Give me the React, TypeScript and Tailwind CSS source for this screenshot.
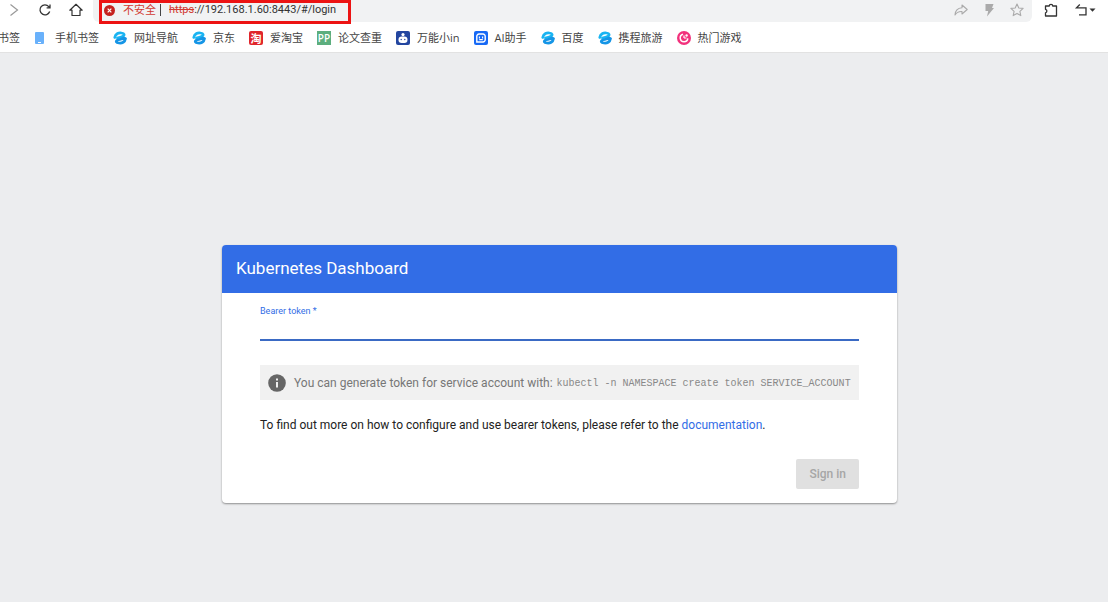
import type { ReactNode } from 'react';

const BrowserSwirl = () => (
  <svg viewBox="0 0 28 28" className="size-3.5" fill="none" strokeLinecap="round" aria-hidden="true">
    <path d="M3.500 13C5 5 12 3 17 4c6 1 7 4.500 2 7-3 1.500-7 2-10 3" stroke="#19b4f2" strokeWidth="5.500" />
    <path d="M25 15c-1 7-7 10-13 9-6-1-7-3.500-3-5.500 4-1.500 8-2 13-4.500" stroke="#1595e6" strokeWidth="5.500" />
  </svg>
);

const PhoneIcon = () => (
  <svg viewBox="0 0 14 14" className="size-3.5" aria-hidden="true">
    <rect x="1" y="1" width="9" height="12" rx="1" fill="#69b1fb" />
    <rect x="4" y="11" width="3" height="1" fill="#fff" />
  </svg>
);

const RobotIcon = () => (
  <svg viewBox="0 0 14 14" className="size-3.5" aria-hidden="true">
    <rect width="14" height="14" rx="2" fill="#2346a0" />
    <circle cx="7" cy="3.600" r="1.600" fill="#fff" />
    <rect x="2.500" y="5.500" width="9" height="6.500" rx="3.200" fill="#fff" />
    <circle cx="5.200" cy="8.500" r="0.700" fill="#2346a0" />
    <circle cx="8.800" cy="8.500" r="0.700" fill="#2346a0" />
  </svg>
);

const AssistantIcon = () => (
  <svg viewBox="0 0 14 14" className="size-3.5" aria-hidden="true">
    <rect width="14" height="14" rx="2" fill="#1769f5" />
    <path d="M5 3h4a2.200 2.200 0 0 1 2.200 2.200v3.600A2.200 2.200 0 0 1 9 11H2.800V5.200A2.200 2.200 0 0 1 5 3z" fill="none" stroke="#fff" strokeWidth="1.400" />
    <path d="M5.400 5.600v1.800M8.600 5.600v1.800M5.200 8.600h3.600" fill="none" stroke="#fff" strokeWidth="1.100" />
  </svg>
);

const GameIcon = () => (
  <svg viewBox="0 0 14 14" className="size-3.5" aria-hidden="true">
    <circle cx="7" cy="7" r="7" fill="#f2317c" />
    <path d="M10.800 7.400A3.800 3.800 0 1 1 6 3.300" fill="none" stroke="#fff" strokeWidth="1.500" />
    <path d="M7 7V4.500M7 7h2.500" fill="none" stroke="#fff" strokeWidth="1.200" />
    <circle cx="9.600" cy="4.500" r="1.200" fill="#fff" />
  </svg>
);

const TaoIcon = () => (
  <span className="flex size-3.5 items-center justify-center rounded-xs bg-[#e0252b] text-[11px] font-bold leading-none text-white">淘</span>
);

const PaperIcon = () => (
  <span className="flex size-3.5 items-center justify-center bg-[#5cae7e] text-[10px] font-semibold leading-none text-white">PP</span>
);

const bookmarks: { label: string; icon: ReactNode }[] = [
  { label: '手机书签', icon: <PhoneIcon /> },
  { label: '网址导航', icon: <BrowserSwirl /> },
  { label: '京东', icon: <BrowserSwirl /> },
  { label: '爱淘宝', icon: <TaoIcon /> },
  { label: '论文查重', icon: <PaperIcon /> },
  { label: '万能小in', icon: <RobotIcon /> },
  { label: 'AI助手', icon: <AssistantIcon /> },
  { label: '百度', icon: <BrowserSwirl /> },
  { label: '携程旅游', icon: <BrowserSwirl /> },
  { label: '热门游戏', icon: <GameIcon /> },
];

const Toolbar = () => (
  <div className="flex h-[22px] items-start">
    <div className="flex w-[93px] shrink-0 items-center gap-[17px] pl-[7px] pt-[3px] text-[#333]">
      <button aria-label="Forward" className="text-[#999]">
        <svg viewBox="0 0 14 14" className="size-3.5" fill="none" stroke="currentColor" strokeWidth="1.200">
          <path d="M3.500 1.500L10.500 7l-7 5.500" />
        </svg>
      </button>
      <button aria-label="Reload">
        <svg viewBox="0 0 14 14" className="size-3.5" fill="none" stroke="currentColor" strokeWidth="1.300">
          <path d="M11.700 8.500A5 5 0 1 1 10.800 3.600l1 1.200M12 1.500v3.400H8.600" />
        </svg>
      </button>
      <button aria-label="Home">
        <svg viewBox="0 0 14 14" className="size-3.5" fill="none" stroke="currentColor" strokeWidth="1.200">
          <path d="M.8 7.200L7 1.300l6.200 5.900H11v5.300H3V7.200z" strokeLinejoin="round" />
        </svg>
      </button>
    </div>

    {/* Address bar */}
    <div className="relative flex h-[22px] min-w-0 flex-1 items-start rounded-b-md bg-[#f1f2f3] pl-[11px] pr-2">
      <div className="pointer-events-none absolute left-[6px] top-0 h-6 w-[252px] border-3 border-[#ec1313]" />
      <div className="flex h-5 shrink-0 items-center text-[11px] leading-5">
        <svg viewBox="0 0 12 12" className="mr-2 size-[11px]" aria-hidden="true">
          <circle cx="6" cy="6" r="6" fill="#c5221f" />
          <path d="M4 4l4 4M8 4L4 8" stroke="#fff" strokeWidth="1.300" />
        </svg>
        <span className="text-[#d23a32]">不安全</span>
        <span className="ml-1 mr-2 h-3 w-px bg-[#444]" />
      </div>
      <label htmlFor="address" className="h-5 font-[Roboto,sans-serif] text-[11px] leading-5 text-[#d23a32] line-through">
        https
      </label>
      <input
        id="address"
        type="text"
        defaultValue="://192.168.1.60:8443/#/login"
        className="h-5 min-w-0 flex-1 bg-transparent font-[Roboto,sans-serif] text-[11px] leading-5 text-[#333] outline-none"
      />
      <div className="flex items-center gap-3.5 pt-[3px] text-[#aaa]">
        <button aria-label="Share">
          <svg viewBox="0 0 14 14" className="size-3.5" fill="none" stroke="currentColor" strokeWidth="1.100">
            <path d="M8 2l5.200 4.500L8 11V8.500C4.500 8.300 2.500 9.500 1 12c.2-4 2.500-7 7-7.300z" strokeLinejoin="round" />
          </svg>
        </button>
        <button aria-label="Speed mode">
          <svg viewBox="0 0 14 14" className="size-3.5" fill="currentColor">
            <path d="M3.500 1h8L10 5h2L5 13.500l1.200-5.500H3.500z" />
          </svg>
        </button>
        <button aria-label="Bookmark this page">
          <svg viewBox="0 0 14 14" className="size-3.5" fill="none" stroke="currentColor" strokeWidth="1.100">
            <path d="M7 1l1.800 4 4.300.4-3.200 2.900.9 4.300L7 10.400l-3.800 2.200.9-4.300L.9 5.400 5.200 5z" strokeLinejoin="round" />
          </svg>
        </button>
      </div>
    </div>

    <div className="flex items-center gap-4 pl-3 pr-3 pt-[3px] text-[#333]">
      <button aria-label="Extensions">
        <svg viewBox="0 0 14 14" className="size-3.5" fill="none" stroke="currentColor" strokeWidth="1.300">
          <path d="M1.500 3h3.800a1.700 1.700 0 0 1 3.400 0h3.800v10h-11V9.800a1.800 1.800 0 0 0 0-3.500z" strokeLinejoin="round" />
        </svg>
      </button>
      <button aria-label="Restore closed tab">
        <svg viewBox="0 0 22 14" className="h-3.5 w-[22px]" fill="none" stroke="currentColor" strokeWidth="1.300">
          <path d="M5.800 1.500L2.500 4.800H12v7H5" />
          <path d="M15.500 5.500h6L18.500 8.800z" fill="currentColor" stroke="none" />
        </svg>
      </button>
    </div>
  </div>
);

const BookmarkBar = () => (
  <nav className="flex h-[31px] items-center gap-3.5 overflow-hidden whitespace-nowrap border-b border-[#e2e2e2] pt-0.5 text-[11px] text-[#444]">
    <a href="#bookmarks" className="-ml-0.5">书签</a>
    {bookmarks.map((b) => (
      <a key={b.label} href={`#${b.label}`} className="flex items-center gap-[7px]">
        {b.icon}
        {b.label}
      </a>
    ))}
  </nav>
);

const LoginCard = () => (
  <form className="w-full max-w-[675px] overflow-hidden rounded bg-white text-xs text-[#222] shadow-[0_1px_2px_rgba(0,0,0,0.4)]">
    <h1 className="bg-[#326de6] px-3.5 pb-px text-[17px] leading-[47px] text-white">Kubernetes Dashboard</h1>
    <div className="px-[38px] pb-3.5 pt-3">
      <label htmlFor="token" className="block text-[9px] leading-3 text-[#326de6]">Bearer token *</label>
      <input
        id="token"
        type="text"
        required
        className="block h-6 w-full border-b-2 border-[#3a6ac4] bg-transparent outline-none"
      />
      <div className="mt-6 flex h-[35px] items-center whitespace-nowrap bg-[#f1f1f1] px-2 text-[#777]">
        <svg viewBox="0 0 18 18" className="mr-2 size-[18px] shrink-0" aria-hidden="true">
          <circle cx="9" cy="9" r="8.800" fill="#666" />
          <path d="M8.100 8h1.800v5.400H8.100zM8.100 4.600h1.800v1.800H8.100z" fill="#fff" />
        </svg>
        <span>You can generate token for service account with:</span>
        <code className="ml-1 pt-0.5 font-['Liberation_Mono',monospace] text-[10px] text-[#888]">
          kubectl -n NAMESPACE create token SERVICE_ACCOUNT
        </code>
      </div>
      <p className="mt-4 leading-[18px]">
        To find out more on how to configure and use bearer tokens, please refer to the{' '}
        <a href="#documentation" className="text-[#326de6]">documentation</a>.
      </p>
      <div className="mt-[25px] flex justify-end">
        <button type="submit" disabled className="h-[30px] rounded-xs bg-[#e0e0e0] px-[13px] font-medium text-[#a6a6a6]">
          Sign in
        </button>
      </div>
    </div>
  </form>
);

export default function App() {
  return (
    <div className="flex min-h-screen flex-col bg-[#ecedef] font-[Roboto,'Noto_Sans_CJK_SC',sans-serif]">
      <header className="bg-white font-['Open_Sans','Noto_Sans_CJK_SC',sans-serif]">
        <Toolbar />
        <BookmarkBar />
      </header>
      <main className="flex flex-1 items-start justify-center pb-12 pl-[11px] pt-48">
        <LoginCard />
      </main>
    </div>
  );
}
